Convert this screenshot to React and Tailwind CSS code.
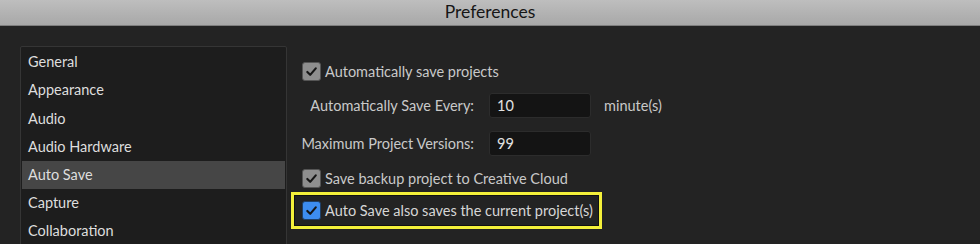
import React from 'react';

const categories = [
  'General',
  'Appearance',
  'Audio',
  'Audio Hardware',
  'Auto Save',
  'Capture',
  'Collaboration',
];

const Check = ({ blue }) => (
  <span
    className={`flex h-[19px] w-[19px] shrink-0 items-center justify-center rounded-[3px] border ${
      blue ? 'border-[#1e3f66] bg-[#3d8df0]' : 'border-[#555] bg-[#8e8e8e]'
    }`}
  >
    <svg width="13" height="13" viewBox="0 0 14 14" fill="none">
      <path d="M2.5 7.5 L5.6 10.6 L11.6 3.6" stroke="#161616" strokeWidth="2.3" strokeLinecap="round" strokeLinejoin="round" />
    </svg>
  </span>
);

const NumberField = ({ value }) => (
  <div className="flex h-[25px] w-[102px] items-center rounded-[3px] border border-[#2c2c2c] bg-[#141414] px-[7px] text-[#e2e2e2]">
    {value}
  </div>
);

const FieldLabel = ({ children }) => (
  <div className="flex w-[172px] shrink-0 justify-end whitespace-nowrap">
    <span>{children}</span>
  </div>
);

export default function App() {
  return (
    <div
      className="h-[244px] w-[980px] overflow-hidden bg-[#232323] text-[14.5px]"
      style={{ fontFamily: 'Lato, "Open Sans", sans-serif' }}
    >
      {/* title bar */}
      <div className="flex h-[26px] items-center justify-center border-b border-[#7e7e7e] bg-gradient-to-b from-[#bebebe] to-[#a8a8a8]">
        <span className="text-[17.5px] text-[#161616]">Preferences</span>
      </div>

      <div className="flex pl-[20px] pt-[20px]">
        {/* category list */}
        <div className="h-[300px] w-[267px] shrink-0 rounded-[2px] border border-[#353535] bg-[#1d1d1d] px-[1px] pt-[1px]">
          {categories.map((c) => (
            <div
              key={c}
              className={`flex h-[28.2px] items-center px-[6px] text-[#dedede] ${
                c === 'Auto Save' ? 'bg-[#464646]' : ''
              }`}
            >
              {c}
            </div>
          ))}
        </div>

        {/* settings */}
        <div className="ml-[4px] mt-[16px] flex flex-col text-[#c9c9c9]">
          <label className="flex h-[19px] items-center gap-[4px] pl-[11px]">
            <Check />
            <span>Automatically save projects</span>
          </label>

          <div className="mt-[12px] flex h-[25px] items-center pl-[11px]">
            <FieldLabel>Automatically Save Every:</FieldLabel>
            <div className="ml-[15px]">
              <NumberField value="10" />
            </div>
            <span className="ml-[13px]">minute(s)</span>
          </div>

          <div className="mt-[13px] flex h-[25px] items-center pl-[11px]">
            <FieldLabel>Maximum Project Versions:</FieldLabel>
            <div className="ml-[15px]">
              <NumberField value="99" />
            </div>
          </div>

          <label className="mt-[13px] flex h-[19px] items-center gap-[4px] pl-[11px]">
            <Check />
            <span>Save backup project to Creative Cloud</span>
          </label>

          <div className="mt-[4px] flex h-[37px] w-[311px] items-center gap-[4px] border-[3px] border-[#f4f03a] pl-[8px] outline outline-1 -outline-offset-4 outline-[#111]">
            <Check blue />
            <span className="text-[#d6d6d6]">Auto Save also saves the current project(s)</span>
          </div>
        </div>
      </div>
    </div>
  );
}
